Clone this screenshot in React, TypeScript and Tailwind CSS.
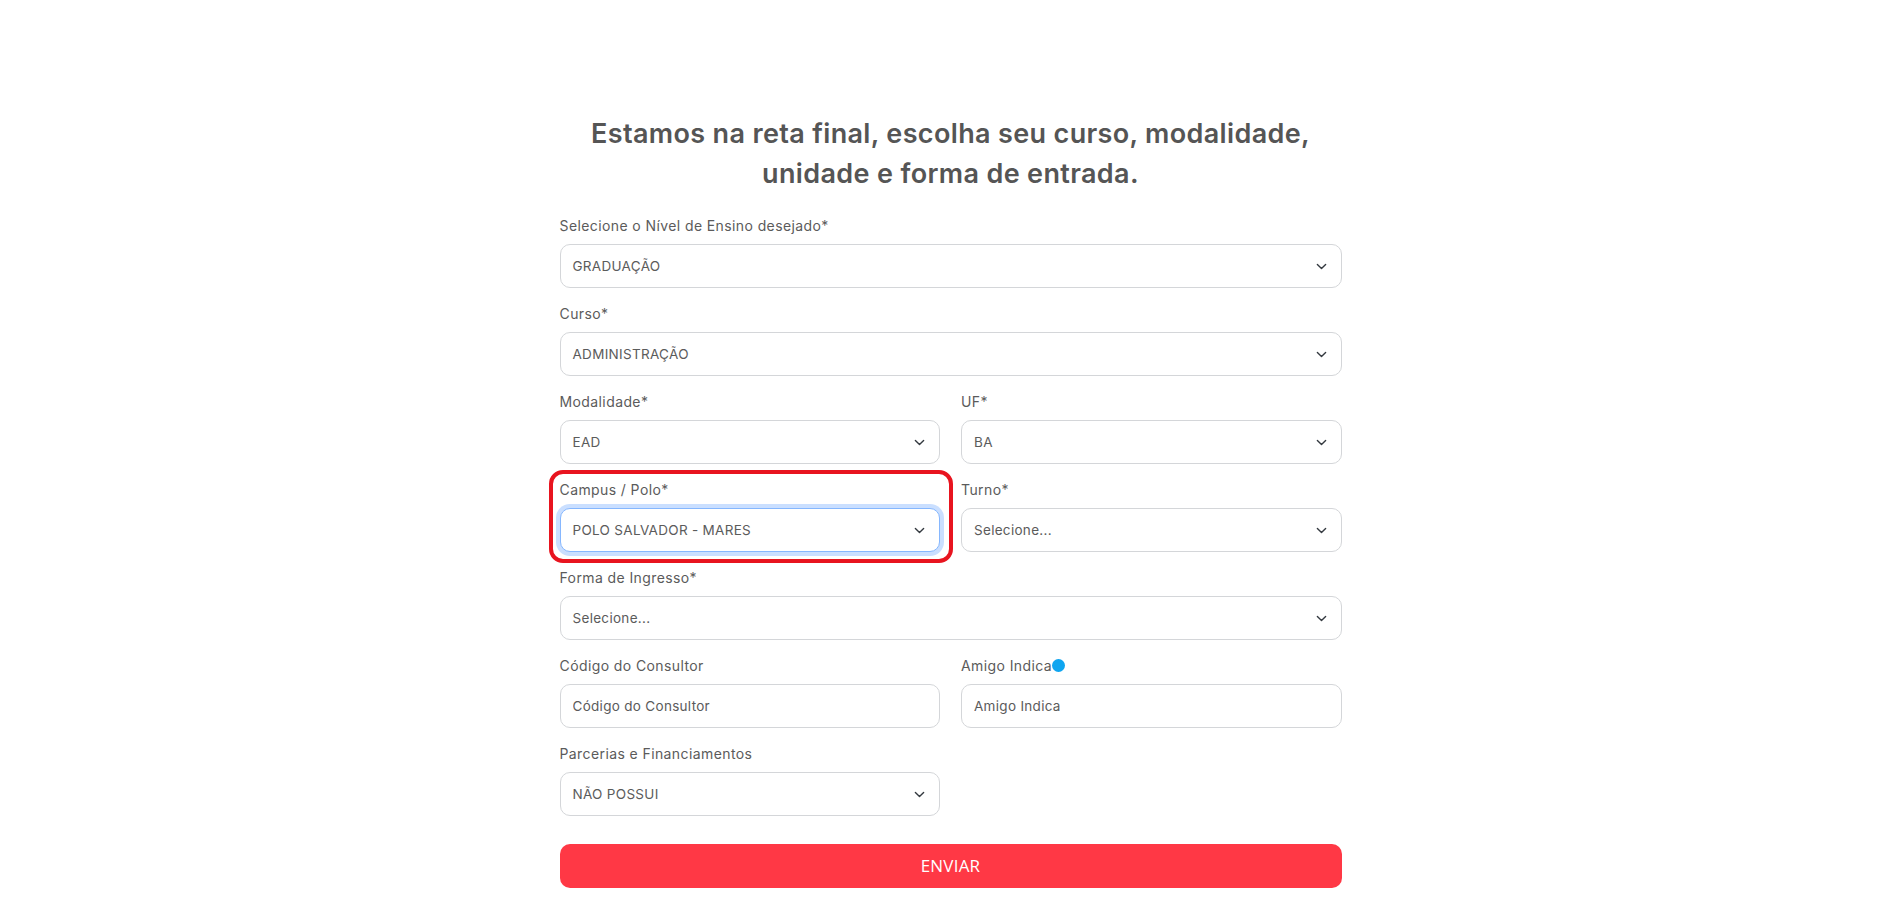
import type { ReactNode } from 'react';

const font = { fontFamily: '"Inter", "Open Sans", sans-serif' };

function Chevron() {
  return (
    <svg className="w-[11px] h-[11px] text-[#343a40]" viewBox="0 0 16 16" fill="none" stroke="currentColor">
      <path strokeLinecap="round" strokeLinejoin="round" strokeWidth={2} d="M2 5l6 6 6-6" />
    </svg>
  );
}

interface FieldProps {
  label: ReactNode;
  children: ReactNode;
  full?: boolean;
}

function Field({ label, children, full }: FieldProps) {
  return (
    <div className={full ? 'col-span-2' : ''}>
      <div className="text-[14px] leading-[21px] tracking-[0.4px] text-[#5b5b5b] mt-[1px] mb-[8px] flex items-center">{label}</div>
      {children}
    </div>
  );
}

function Select({ value, focused }: { value: string; focused?: boolean }) {
  return (
    <div
      className={
        focused
          ? 'h-[44px] rounded-[10px] border border-[#86b7fe] shadow-[0_0_0_4px_rgba(13,110,253,0.22)] bg-white flex items-center justify-between pl-3 pr-[14px]'
          : 'h-[44px] rounded-[10px] border border-[#d4d6d9] bg-white flex items-center justify-between pl-3 pr-[14px]'
      }
    >
      <span className="text-[13.5px] tracking-[0.3px] text-[#5b5b5b]">{value}</span>
      <Chevron />
    </div>
  );
}

function TextInput({ placeholder }: { placeholder: string }) {
  return (
    <input
      placeholder={placeholder}
      className="w-full h-[44px] rounded-[10px] border border-[#d4d6d9] bg-white px-3 text-[13.5px] tracking-[0.3px] text-[#5b5b5b] placeholder:text-[#5b5b5b] outline-none"
      style={font}
    />
  );
}

export default function App() {
  return (
    <div className="min-h-screen bg-white pt-[114px]" style={font}>
      <div className="w-[782px] mx-auto">
        <h1 className="text-center text-[27px] leading-[40px] font-semibold text-[#555555] tracking-[0.35px]">
          Estamos na reta final, escolha seu curso, modalidade,
          <br />
          unidade e forma de entrada.
        </h1>

        <form className="mt-[20px] grid grid-cols-2 gap-x-[21px] gap-y-[14px]">
          <Field label="Selecione o Nível de Ensino desejado*" full>
            <Select value="GRADUAÇÃO" />
          </Field>
          <Field label="Curso*" full>
            <Select value="ADMINISTRAÇÃO" />
          </Field>
          <Field label="Modalidade*">
            <Select value="EAD" />
          </Field>
          <Field label="UF*">
            <Select value="BA" />
          </Field>
          <div className="relative">
            <div className="text-[14px] leading-[21px] tracking-[0.4px] text-[#5b5b5b] mt-[1px] mb-[8px]">Campus / Polo*</div>
            <Select value="POLO SALVADOR - MARES" focused />
            <div className="absolute -left-[11px] -right-[13px] -top-[8px] -bottom-[11px] border-[4px] border-[#e8141f] rounded-[14px] pointer-events-none" />
          </div>
          <Field label="Turno*">
            <Select value="Selecione..." />
          </Field>
          <Field label="Forma de Ingresso*" full>
            <Select value="Selecione..." />
          </Field>
          <Field label="Código do Consultor">
            <TextInput placeholder="Código do Consultor" />
          </Field>
          <Field
            label={
              <>
                Amigo Indica
                <span className="inline-block w-[13px] h-[13px] rounded-full bg-[#0ea5f0]" />
              </>
            }
          >
            <TextInput placeholder="Amigo Indica" />
          </Field>
          <Field label="Parcerias e Financiamentos">
            <Select value="NÃO POSSUI" />
          </Field>
          <div />
          <button
            type="button"
            className="col-span-2 mt-[14px] h-[44px] rounded-[10px] bg-[#ff3845] text-white text-[17px] tracking-[0.2px]"
            style={{ fontFamily: '"Open Sans", sans-serif' }}
          >
            ENVIAR
          </button>
        </form>
      </div>
    </div>
  );
}
